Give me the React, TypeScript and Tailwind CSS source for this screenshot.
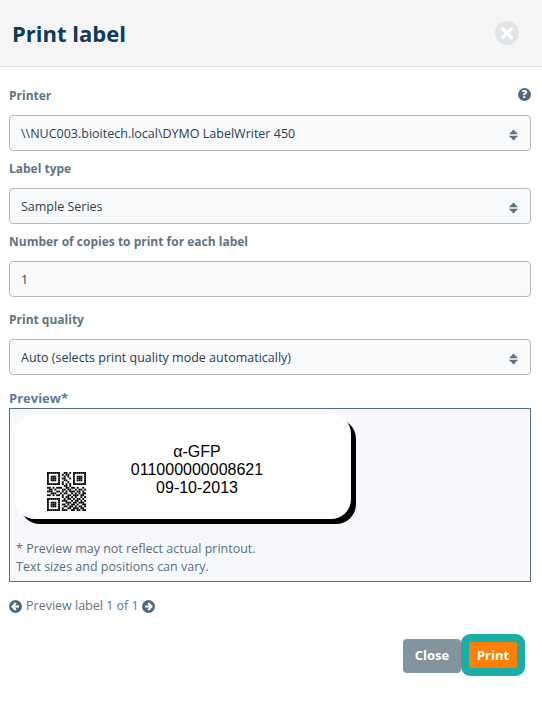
const qr = [
  '111111100110101111111',
  '100000101011001000001',
  '101110100101001011101',
  '101110101100101011101',
  '101110100110001011101',
  '100000101001001000001',
  '111111101010101111111',
  '000000000110100000000',
  '110101110011011010010',
  '011010001101100101101',
  '111001101010111011010',
  '001110010110010101011',
  '110101101001101110110',
  '000000001011010100101',
  '111111100101101011010',
  '100000101110010110101',
  '101110100011101101110',
  '101110101101011010011',
  '101110100110110101101',
  '100000101001101110110',
  '111111101110011011011',
];

function QrCode() {
  return (
    <svg width="39" height="39" viewBox="0 0 21 21" className="shrink-0">
      {qr.map((row, y) =>
        row.split('').map((c, x) => (c === '1' ? <rect key={`${x}-${y}`} x={x} y={y} width="1" height="1" fill="#000" /> : null))
      )}
    </svg>
  );
}

function SortIcon() {
  return (
    <svg width="9" height="12" viewBox="0 0 10 13" className="shrink-0">
      <path d="M5 0.5 L9.5 5 Q9.8 5.6 9.2 5.6 L0.8 5.6 Q0.2 5.6 0.5 5 Z" fill="#5b7282" />
      <path d="M5 12.5 L9.5 8 Q9.8 7.4 9.2 7.4 L0.8 7.4 Q0.2 7.4 0.5 8 Z" fill="#5b7282" />
    </svg>
  );
}

function ArrowCircle({ dir }: { dir: 'left' | 'right' }) {
  return (
    <svg width="13" height="13" viewBox="0 0 13 13" className="shrink-0">
      <circle cx="6.5" cy="6.5" r="6.5" fill="#4f6a7c" />
      <path
        d={dir === 'left' ? 'M6.8 3 L3.4 6.5 L6.8 10 M3.6 6.5 H10' : 'M6.2 3 L9.6 6.5 L6.2 10 M9.4 6.5 H3'}
        stroke="#fff"
        strokeWidth="2"
        fill="none"
      />
    </svg>
  );
}

function Field({ label, value, select, className }: { label: string; value: string; select?: boolean; className?: string }) {
  return (
    <div className={className}>
      <div className="text-[12px] leading-[18px] font-bold text-[#5f7482]">{label}</div>
      <div className="mt-[10px] h-[36px] flex items-center justify-between pl-[11px] pr-[12px] pt-[3px] bg-[#f8f9fb] border border-[#b8b8b8] rounded-[4px] text-[12.5px] text-[#2c3e4c]">
        <span>{value}</span>
        {select && <SortIcon />}
      </div>
    </div>
  );
}

export default function App() {
  return (
    <div className="w-[542px] h-[702px] bg-white font-['Open_Sans',sans-serif] overflow-hidden">
      <header className="h-[67px] bg-[#f5f5f6] border-b border-[#e3e3e3] flex items-center justify-between pl-[12px] pr-[23px]">
        <h1 className="text-[22px] font-bold text-[#0e3b58]">Print label</h1>
        <svg width="24" height="24" viewBox="0 0 24 24">
          <circle cx="12" cy="12" r="12" fill="#e1e4e7" />
          <path d="M7.8 7.8 L16.2 16.2 M16.2 7.8 L7.8 16.2" stroke="#fff" strokeWidth="3.4" strokeLinecap="round" />
        </svg>
      </header>

      <main className="pl-[9px] pr-[11px] pt-[20px]">
        <div className="relative flex flex-col gap-[9px]">
          <svg width="13" height="13" viewBox="0 0 13 13" className="absolute right-0 top-[1px]">
            <circle cx="6.5" cy="6.5" r="6.5" fill="#4f6a7c" />
            <text x="6.5" y="10.4" textAnchor="middle" fontSize="10.5" fontWeight="800" fill="#fff" fontFamily="Open Sans">?</text>
          </svg>
          <Field label="Printer" value="\\NUC003.bioitech.local\DYMO LabelWriter 450" select />
          <Field label="Label type" value="Sample Series" select />
          <Field label="Number of copies to print for each label" value="1" />
          <Field className="mt-[5px]" label="Print quality" value="Auto (selects print quality mode automatically)" select />
        </div>

        <div className="mt-[14px] mb-[1px] text-[13px] leading-[18px] font-bold text-[#5b7a96]">Preview*</div>
        <div className="h-[174px] bg-[#f7f8fb] border border-[#566f7f] pt-[5px] pl-[5px]">
          <div className="w-[336px] h-[105px] bg-white rounded-[20px] shadow-[5px_5px_0_0_#000] flex items-end pl-[32px] pb-[8px] relative">
            <QrCode />
            <div className="absolute left-[28px] right-[0px] top-[29px] text-center font-['Liberation_Sans',sans-serif] text-[16px] leading-[18px] text-black">
              <div>α-GFP</div>
              <div>011000000008621</div>
              <div>09-10-2013</div>
            </div>
          </div>
          <div className="mt-[21px] pl-[1px] text-[12.5px] leading-[18px] text-[#5b6f7d]">
            <div>* Preview may not reflect actual printout.</div>
            <div>Text sizes and positions can vary.</div>
          </div>
        </div>

        <div className="mt-[15px] h-[18px] flex items-center gap-[3px] text-[12.5px] text-[#5f7482]">
          <ArrowCircle dir="left" />
          <span className="pl-[1px]">Preview label 1 of 1</span>
          <ArrowCircle dir="right" />
        </div>

        <div className="mt-[24px] flex justify-end items-center pr-[14px]">
          <button className="w-[58px] h-[34px] bg-[#82959f] rounded-[4px] text-[13px] font-bold text-white">Close</button>
          <button className="ml-[8px] mb-[2px] pt-[1px] w-[48px] h-[26px] bg-[#ff8000] rounded-[3px] ring-8 ring-[#1aaea6] text-[13px] font-bold text-white">Print</button>
        </div>
      </main>
    </div>
  );
}
